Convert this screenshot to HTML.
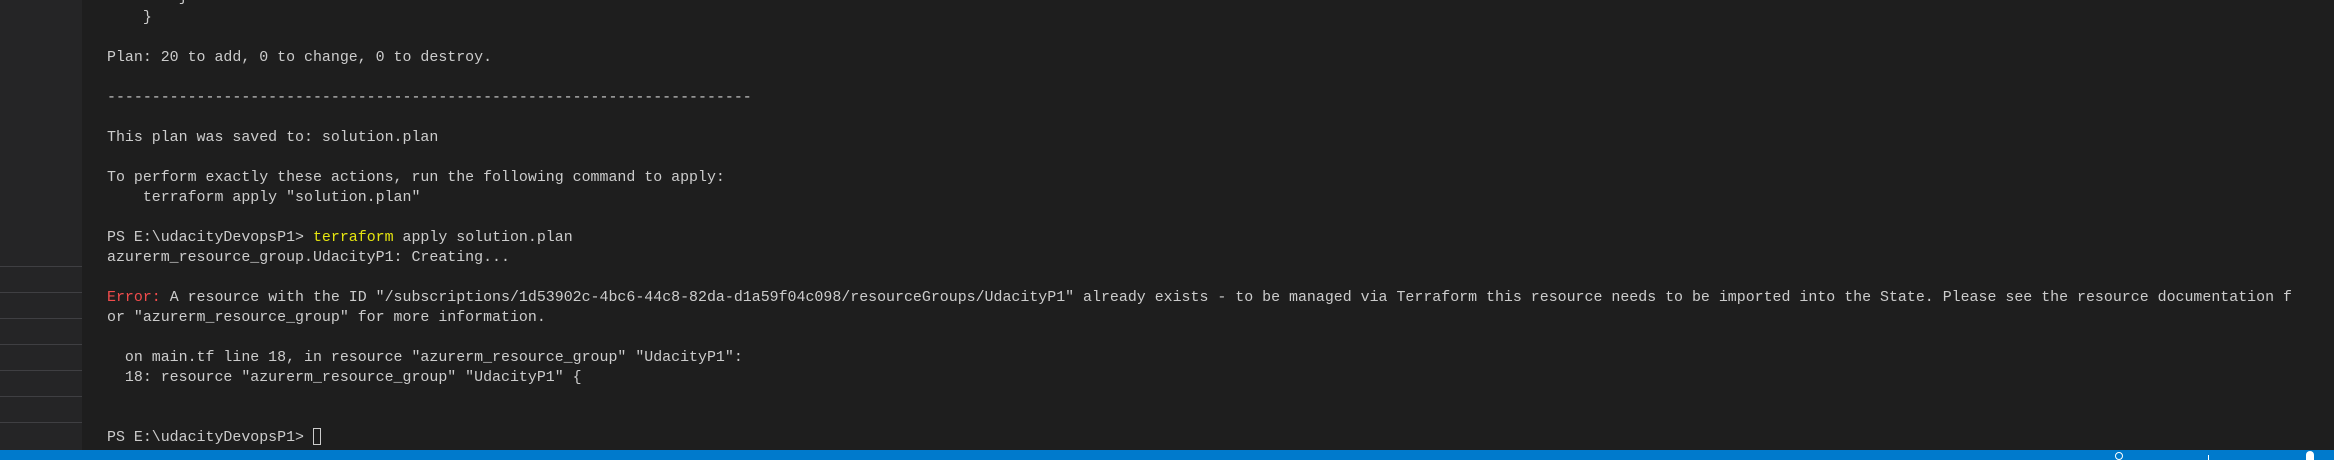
<!DOCTYPE html>
<html><head><meta charset="utf-8"><style>
html,body{margin:0;padding:0;width:2334px;height:460px;overflow:hidden;background:#1e1e1e;}
#side{position:absolute;left:0;top:0;width:82px;height:450px;background:#252526;}
.ln{position:absolute;left:0;width:82px;height:1px;background:#3f3f42;}
pre{position:absolute;left:107px;top:-12px;margin:0;font-family:"Liberation Mono",monospace;font-size:14.93px;line-height:20px;color:#cccccc;white-space:pre;}
.y{color:#e5e510}.r{color:#f14c4c}
.cur{display:inline-block;width:8px;height:17px;border:1px solid #cccccc;vertical-align:-4px;box-sizing:border-box;}
#status{position:absolute;left:0;top:450px;width:2334px;height:10px;background:#007acc;}
</style></head><body>
<div id="side">
<div class="ln" style="top:266px"></div><div class="ln" style="top:292px"></div><div class="ln" style="top:318px"></div><div class="ln" style="top:344px"></div><div class="ln" style="top:370px"></div><div class="ln" style="top:396px"></div><div class="ln" style="top:422px"></div>
</div>
<pre>        }
    }

Plan: 20 to add, 0 to change, 0 to destroy.

------------------------------------------------------------------------

This plan was saved to: solution.plan

To perform exactly these actions, run the following command to apply:
    terraform apply "solution.plan"

PS E:\udacityDevopsP1> <span class="y">terraform</span> apply solution.plan
azurerm_resource_group.UdacityP1: Creating...

<span class="r">Error:</span> A resource with the ID "/subscriptions/1d53902c-4bc6-44c8-82da-d1a59f04c098/resourceGroups/UdacityP1" already exists - to be managed via Terraform this resource needs to be imported into the State. Please see the resource documentation f
or "azurerm_resource_group" for more information.

  on main.tf line 18, in resource "azurerm_resource_group" "UdacityP1":
  18: resource "azurerm_resource_group" "UdacityP1" {


PS E:\udacityDevopsP1> <span class="cur"></span></pre>
<div id="status">
<div style="position:absolute;left:2115px;top:2px;width:8px;height:8px;border-radius:50%;border:1px solid #fff;box-sizing:border-box"></div>
<div style="position:absolute;left:2208px;top:5px;width:1px;height:5px;background:#fff"></div>
<div style="position:absolute;left:2306px;top:1px;width:8px;height:9px;border-radius:4px 4px 0 0;background:#fff"></div>
</div>
</body></html>
